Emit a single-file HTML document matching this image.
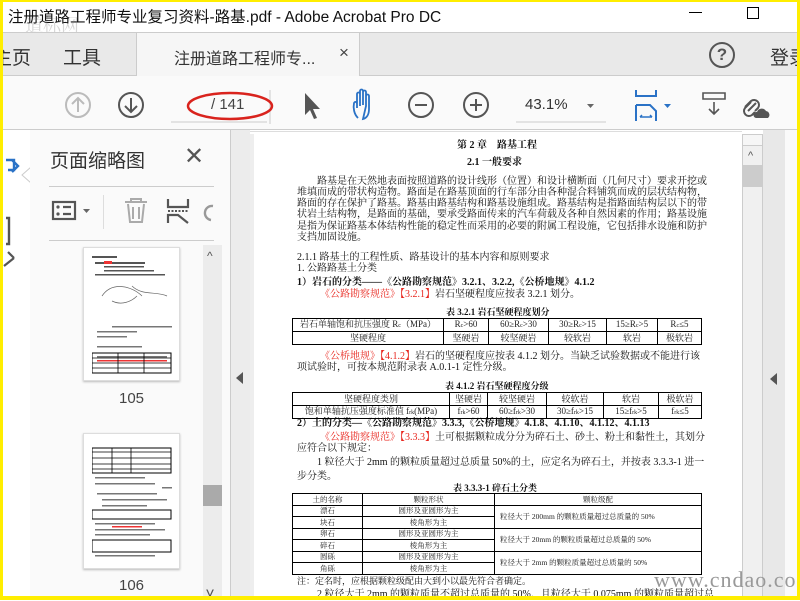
<!DOCTYPE html>
<html><head><meta charset="utf-8">
<style>
*{margin:0;padding:0;box-sizing:border-box}
body{width:800px;height:600px;overflow:hidden;position:relative;background:#fff;font-family:"Liberation Sans","Noto Sans CJK SC",sans-serif}
.a{position:absolute;white-space:nowrap}
.doc{font-family:"Liberation Serif","Noto Serif CJK SC",serif;font-size:10px;color:#111;line-height:12px}
.r{color:#e8261e}
table{position:absolute;border-collapse:collapse;table-layout:fixed;font-family:"Liberation Serif","Noto Serif CJK SC",serif;font-size:9px;color:#222}
td{border:1.3px solid #000;text-align:center;padding:0;line-height:10px;height:13px;white-space:nowrap;overflow:hidden}
.t3 td{font-size:7.5px;border-width:1px;height:11.5px;line-height:9px}
i{font-size:6px;font-style:normal}
.th{border:1px solid #ddd;background:#fff;box-shadow:0 1px 2px #bbb}
</style></head><body>
<!-- title bar -->
<div class="a" style="left:8px;top:5px;font-size:15.5px;color:#111">注册道路工程师专业复习资料-路基.pdf - Adobe Acrobat Pro DC</div>
<div class="a" style="left:25px;top:12px;font-size:18px;color:rgba(120,120,120,.3);font-family:'Noto Serif CJK SC',serif">道标网</div>
<div class="a" style="left:689px;top:12px;width:13px;height:1px;background:#000"></div>
<div class="a" style="left:747px;top:7px;width:12px;height:12px;border:1px solid #000"></div>
<!-- tab bar -->
<div class="a" style="left:0;top:32px;width:800px;height:44px;background:#e9e9e9;border-top:1px solid #ccc;border-bottom:1px solid #ccc"></div>
<div class="a" style="left:136px;top:33px;width:224px;height:43px;background:#f6f6f6;border-left:1px solid #ccc;border-right:1px solid #ccc"></div>
<div class="a" style="left:-7px;top:43px;font-size:19px;color:#333">主页</div>
<div class="a" style="left:63px;top:43px;font-size:19px;color:#333">工具</div>
<div class="a" style="left:174px;top:45px;font-size:16px;color:#333">注册道路工程师专...</div>
<div class="a" style="left:339px;top:43px;font-size:17px;color:#444">×</div>
<div class="a" style="left:709px;top:42px;width:26px;height:26px;border:2px solid #555;border-radius:50%;text-align:center;font-size:17px;line-height:22px;color:#555;font-weight:bold">?</div>
<div class="a" style="left:770px;top:43px;font-size:19px;color:#333">登录</div>
<!-- toolbar -->
<div class="a" style="left:0;top:76px;width:800px;height:54px;background:#fafafa;border-bottom:1px solid #ccc"></div>
<svg class="a" style="left:0;top:76px" width="800" height="54">
<g fill="none" stroke-width="2">
<circle cx="78" cy="29" r="12" stroke="#bbb"/><path d="M78 36V22M72 28l6-6 6 6" stroke="#bbb"/>
<circle cx="131" cy="29" r="12" stroke="#555"/><path d="M131 22v14M125 30l6 6 6-6" stroke="#555"/>
<path d="M171 46h96" stroke="#ccc" stroke-width="1"/><path d="M270 14v34" stroke="#ccc" stroke-width="1"/>
<ellipse cx="230" cy="30" rx="42" ry="13" stroke="#d9231d" stroke-width="2.5"/>
<circle cx="421" cy="29" r="12" stroke="#555"/><path d="M415 29h12" stroke="#555"/>
<circle cx="476" cy="29" r="12" stroke="#555"/><path d="M470 29h12M476 23v12" stroke="#555"/>
<path d="M516 46h90" stroke="#ccc" stroke-width="1"/>
<path d="M636 14v6h20v-6M636 29v16M636 29h14l6 6v10" stroke="#2a72c6"/>
<path d="M640 41h12M640 41l2-2M652 41l-2-2" stroke="#2a72c6" stroke-width="1.5"/>
<path d="M703 17h22v6h-22zM714 26v12M709 33l5 5 5-5" stroke="#555" stroke-width="1.6"/>
<path d="M745 31l6-6a5 5 0 017 7l-3 3M751 26l-6 6a5 5 0 007 7l3-3M748 35l8-8" stroke="#555" stroke-width="2"/>
</g>
<path d="M305 17v22l5-5 4 9 3-1-4-9 7 0z" fill="#555"/>
<path d="M358 42c-4-4-5-10-4-15 1-2 3-1 3 1v4M357 32V18c0-2 3-2 3 0v12M360 28V15c0-2 3-2 3 0v14M363 29V16c0-2 3-2 3 0v14M366 30V20c0-2 3-2 3 0v13c0 5-2 9-6 10z" fill="none" stroke="#2a72c6" stroke-width="1.8"/>
<path d="M587 28h7l-3.5 4z" fill="#666"/>
<path d="M664 28h7l-3.5 4z" fill="#2a72c6"/>
<path d="M756 42h12a4 4 0 00-2-7 5 5 0 00-9 1 3 3 0 00-1 6z" fill="#555"/>
</svg>
<div class="a" style="left:211px;top:96px;font-size:15px;color:#444">/ 141</div>
<div class="a" style="left:525px;top:96px;font-size:15px;color:#333">43.1%</div>
<!-- left nav -->
<div class="a" style="left:30px;top:134px;width:1px;height:466px;background:#ccc"></div>
<svg class="a" style="left:0;top:130px" width="32" height="140"><path d="M6 30h8v10h-6M12 30l6 6-6 6" fill="none" stroke="#2a72c6" stroke-width="2.4"/>
<path d="M6 88h3v26h-3" fill="none" stroke="#555" stroke-width="2.4"/><path d="M8 122l6 6M4 136l10-8" stroke="#555" stroke-width="2.2" fill="none"/>
<path d="M22 45l9-8v16z" fill="#fff" stroke="#ccc"/></svg>
<div class="a" style="left:30px;top:130px;width:200px;height:470px;background:#fafafa"></div>
<div class="a" style="left:50px;top:146px;font-size:19px;color:#333">页面缩略图</div>
<div class="a" style="left:184px;top:142px;font-size:24px;color:#555">✕</div>
<div class="a" style="left:49px;top:186px;width:165px;height:1px;background:#ccc"></div>
<div class="a" style="left:49px;top:240px;width:165px;height:1px;background:#ccc"></div>
<div class="a" style="left:103px;top:195px;width:1px;height:34px;background:#ddd"></div>
<svg class="a" style="left:45px;top:190px" width="180" height="45"><g fill="none" stroke="#555" stroke-width="2.2"><rect x="8" y="12" width="22" height="17"/><path d="M18 17h8M18 24h8"/></g><circle cx="13" cy="17" r="1.6" fill="#555"/><circle cx="13" cy="24" r="1.6" fill="#555"/><path d="M38 19h7l-3.5 4z" fill="#666"/>
<g fill="none" stroke="#aaa" stroke-width="2"><path d="M80 12h22M86 12v-3h10v3M83 14l2 18h12l2-18M88 17v12M94 17v12"/></g>
<g fill="none" stroke="#555" stroke-width="2.2"><path d="M123 9v8h20v-8M123 33v-8h10l10 8"/></g><path d="M123 21h20" stroke="#555" stroke-dasharray="2 1.5" stroke-width="2"/><path d="M168 16a5 5 0 00-2 14" stroke="#999" stroke-width="2.4" fill="none"/></svg>
<!-- thumbs -->
<div class="a th" style="left:83px;top:247px;width:97px;height:134px"></div>
<svg class="a" style="left:92px;top:256px" width="82" height="120"><g fill="#555"><rect x="0" y="0" width="25" height="2"/><rect x="3" y="6" width="50" height="2"/><rect x="12" y="10" width="40" height="1.5"/><rect x="12" y="14" width="50" height="1.5"/><rect x="3" y="18" width="70" height="1.5"/></g><rect x="12" y="5" width="8" height="3" fill="#e33"/><path d="M10 40c10-15 30-10 40 0M40 30c10 10 25 5 35 10M20 45c10 5 20 0 25-5" stroke="#666" fill="none" stroke-width=".7"/><g fill="#777"><rect x="20" y="70" width="60" height="1.5"/><rect x="5" y="75" width="40" height="1.5"/><rect x="5" y="80" width="30" height="1.5"/><rect x="5" y="90" width="45" height="1.5"/><rect x="5" y="100" width="70" height="1.5"/></g><rect x="5" y="104" width="70" height="1.5" fill="#e33"/><rect x="0" y="97" width="79" height="20" fill="none" stroke="#000"/><path d="M0 102h79M0 107h79M0 112h79M26 97v20M52 97v20" stroke="#000" stroke-width=".8"/></svg>
<div class="a" style="left:119px;top:390px;font-size:15px;color:#444">105</div>
<div class="a th" style="left:83px;top:433px;width:97px;height:136px"></div>
<svg class="a" style="left:92px;top:445px" width="82" height="120"><rect x="0" y="3" width="79" height="25" fill="none" stroke="#000"/><path d="M0 7h79M0 13h79M0 19h79M0 24h79M20 3v25M39 3v25" stroke="#000" stroke-width=".8"/><g fill="#777"><rect x="3" y="32" width="50" height="1.5"/><rect x="3" y="38" width="60" height="1.5"/><rect x="70" y="42" width="10" height="1.5"/><rect x="5" y="48" width="60" height="1.5"/><rect x="10" y="54" width="65" height="1.5"/><rect x="10" y="60" width="45" height="1.5"/></g><rect x="0" y="65" width="79" height="9" fill="none" stroke="#000"/><rect x="0" y="95" width="79" height="12" fill="none" stroke="#000"/><g fill="#777"><rect x="3" y="78" width="60" height="1.5"/><rect x="3" y="84" width="70" height="1.5"/><rect x="3" y="89" width="55" height="1.5"/><rect x="3" y="110" width="60" height="1.5"/></g><rect x="20" y="81" width="30" height="1.5" fill="#e33"/></svg>
<div class="a" style="left:119px;top:577px;font-size:15px;color:#444">106</div>
<div class="a" style="left:203px;top:245px;width:19px;height:355px;background:#ececec"></div>
<div class="a" style="left:203px;top:485px;width:19px;height:21px;background:#aaa"></div>
<div class="a" style="left:207px;top:249px;font-size:12px;color:#555">^</div>
<div class="a" style="left:207px;top:585px;font-size:12px;color:#555;transform:scaleX(1.3)">v</div>
<!-- left collapse -->
<div class="a" style="left:230px;top:130px;width:20px;height:470px;background:#ececec;border-left:1px solid #ccc"></div>
<div class="a" style="left:236px;top:372px;width:0;height:0;border-top:6px solid transparent;border-bottom:6px solid transparent;border-right:7px solid #555"></div>
<!-- doc area -->
<div class="a" style="left:250px;top:131px;width:492px;height:469px;background:#fff;border-top:1px solid #ddd"></div>
<div class="a" style="left:250px;top:134px;width:4px;height:466px;background:#eee"></div>
<div class="doc">
<div class="a" style="left:457px;top:140px;font-weight:bold">第 2 章　路基工程</div>
<div class="a" style="left:467px;top:157px;font-weight:bold">2.1 一般要求</div>
<div class="a" style="left:317px;top:176px">路基是在天然地表面按照道路的设计线形（位置）和设计横断面（几何尺寸）要求开挖或</div>
<div class="a" style="left:297px;top:187px">堆填而成的带状构造物。路面是在路基顶面的行车部分由各种混合料铺筑而成的层状结构物，</div>
<div class="a" style="left:297px;top:198px">路面的存在保护了路基。路基由路基结构和路基设施组成。路基结构是指路面结构层以下的带</div>
<div class="a" style="left:297px;top:209px">状岩土结构物，是路面的基础，要承受路面传来的汽车荷载及各种自然因素的作用；路基设施</div>
<div class="a" style="left:297px;top:221px">是指为保证路基本体结构性能的稳定性而采用的必要的附属工程设施，它包括排水设施和防护</div>
<div class="a" style="left:297px;top:232px">支挡加固设施。</div>
<div class="a" style="left:297px;top:252px">2.1.1 路基土的工程性质、路基设计的基本内容和原则要求</div>
<div class="a" style="left:297px;top:263px">1. 公路路基土分类</div>
<div class="a" style="left:297px;top:277px;font-weight:bold">1）岩石的分类——《公路勘察规范》3.2.1、3.2.2,《公桥地规》4.1.2</div>
<div class="a" style="left:320px;top:289px"><span class="r">《公路勘察规范》【3.2.1】</span>岩石坚硬程度应按表 3.2.1 划分。</div>
<div class="a" style="left:446px;top:306px;font-size:9px;font-weight:bold">表 3.2.1 岩石坚硬程度划分</div>
<div class="a" style="left:320px;top:351px"><span class="r">《公桥地规》【4.1.2】</span>岩石的坚硬程度应按表 4.1.2 划分。当缺乏试验数据或不能进行该</div>
<div class="a" style="left:297px;top:362px">项试验时，可按本规范附录表 A.0.1-1 定性分级。</div>
<div class="a" style="left:445px;top:380px;font-size:9px;font-weight:bold">表 4.1.2 岩石坚硬程度分级</div>
<div class="a" style="left:297px;top:418px;font-weight:bold">2）土的分类—《公路勘察规范》3.3.3,《公桥地规》4.1.8、4.1.10、4.1.12、4.1.13</div>
<div class="a" style="left:320px;top:432px"><span class="r">《公路勘察规范》【3.3.3】</span>土可根据颗粒成分分为碎石土、砂土、粉土和黏性土，其划分</div>
<div class="a" style="left:297px;top:443px">应符合以下规定：</div>
<div class="a" style="left:317px;top:457px">1 粒径大于 2mm 的颗粒质量超过总质量 50%的土，应定名为碎石土，并按表 3.3.3-1 进一</div>
<div class="a" style="left:297px;top:471px">步分类。</div>
<div class="a" style="left:453px;top:482px;font-size:9px;font-weight:bold">表 3.3.3-1 碎石土分类</div>
<div class="a" style="left:297px;top:575px;font-size:9px">注：定名时，应根据颗粒级配由大到小以最先符合者确定。</div>
<div class="a" style="left:317px;top:589px">2 粒径大于 2mm 的颗粒质量不超过总质量的 50%，且粒径大于 0.075mm 的颗粒质量超过总</div>
</div>
<table style="left:292px;top:318px;width:410px"><colgroup><col style="width:151px"><col style="width:45px"><col style="width:60px"><col style="width:58px"><col style="width:51px"><col></colgroup><tr><td>岩石单轴饱和抗压强度 R<i>c</i>（MPa）</td><td>R<i>c</i>&gt;60</td><td>60≥R<i>c</i>&gt;30</td><td>30≥R<i>c</i>&gt;15</td><td>15≥R<i>c</i>&gt;5</td><td>R<i>c</i>≤5</td></tr><tr><td>坚硬程度</td><td>坚硬岩</td><td>较坚硬岩</td><td>较软岩</td><td>软岩</td><td>极软岩</td></tr></table>
<table style="left:292px;top:392px;width:410px"><colgroup><col style="width:157px"><col style="width:38px"><col style="width:59px"><col style="width:57px"><col style="width:55px"><col></colgroup><tr><td>坚硬程度类别</td><td>坚硬岩</td><td>较坚硬岩</td><td>较软岩</td><td>软岩</td><td>极软岩</td></tr><tr><td>饱和单轴抗压强度标准值 f<i>rk</i>(MPa)</td><td>f<i>rk</i>&gt;60</td><td>60≥f<i>rk</i>&gt;30</td><td>30≥f<i>rk</i>&gt;15</td><td>15≥f<i>rk</i>&gt;5</td><td>f<i>rk</i>≤5</td></tr></table>
<table class="t3" style="left:292px;top:493px;width:410px"><colgroup><col style="width:70px"><col style="width:132px"><col></colgroup><tr><td>土的名称</td><td>颗粒形状</td><td>颗粒级配</td></tr>
<tr><td>漂石</td><td>圆形及亚圆形为主</td><td rowspan="2" style="text-align:left;padding-left:5px">粒径大于 200mm 的颗粒质量超过总质量的 50%</td></tr><tr><td>块石</td><td>棱角形为主</td></tr>
<tr><td>卵石</td><td>圆形及亚圆形为主</td><td rowspan="2" style="text-align:left;padding-left:5px">粒径大于 20mm 的颗粒质量超过总质量的 50%</td></tr><tr><td>碎石</td><td>棱角形为主</td></tr>
<tr><td>圆砾</td><td>圆形及亚圆形为主</td><td rowspan="2" style="text-align:left;padding-left:5px">粒径大于 2mm 的颗粒质量超过总质量的 50%</td></tr><tr><td>角砾</td><td>棱角形为主</td></tr></table>
<!-- right side -->
<div class="a" style="left:742px;top:134px;width:21px;height:466px;background:#f0f0f0;border-left:1px solid #ccc;border-right:1px solid #ccc"></div>
<div class="a" style="left:742px;top:134px;width:21px;height:12px;background:#f6f6f6;border:1px solid #ccc"></div>
<div class="a" style="left:748px;top:150px;font-size:11px;color:#555">^</div>
<div class="a" style="left:743px;top:165px;width:19px;height:22px;background:#ccc"></div>
<div class="a" style="left:763px;top:130px;width:22px;height:470px;background:#e8e8e8"></div>
<div class="a" style="left:770px;top:373px;width:0;height:0;border-top:6px solid transparent;border-bottom:6px solid transparent;border-right:7px solid #555"></div>
<div class="a" style="left:785px;top:130px;width:12px;height:470px;background:#fafafa"></div>
<div class="a" style="left:654px;top:567px;font-size:22px;color:#999;font-family:'Liberation Serif',serif;letter-spacing:1px">www.cndao.com</div>
<!-- yellow border -->
<div class="a" style="left:0;top:0;width:800px;height:600px;border:solid #ffee00;border-width:2px 3px 4px 3px"></div>
</body></html>
